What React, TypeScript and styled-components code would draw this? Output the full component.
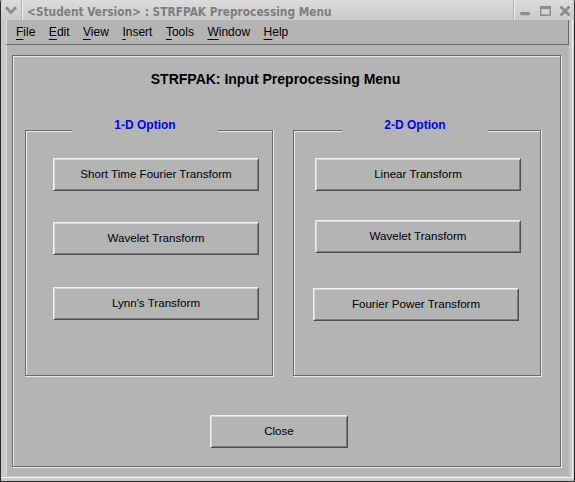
import React from 'react';
import styled, { createGlobalStyle } from 'styled-components';

const DARK = '#6b6b6b';
const LIGHT = '#e9e9e9';
const FACE = '#b4b4b4';
const ICON = '#8c8c8c';

const GlobalStyle = createGlobalStyle`
  html, body { margin: 0; padding: 0; background: #b4b4b4; }
  body { font-family: "Liberation Sans", Arial, sans-serif; }
  * { box-sizing: border-box; }
`;

const Window = styled.div`
  width: 575px;
  height: 482px;
  display: flex;
  flex-direction: column;
  background: #c9c9c9;
  border: 1px solid #2a2a2a;
  border-top: none;
  border-top-left-radius: 3px;
  border-top-right-radius: 3px;
  overflow: hidden;
`;

const TitleBar = styled.header`
  height: 20px;
  flex: none;
  display: flex;
  align-items: stretch;
  background: linear-gradient(#dcdcdc, #cacaca);
`;

const TitleButton = styled.div<{ $w?: number }>`
  width: ${(p) => p.$w ?? 20}px;
  flex: none;
  display: flex;
  align-items: center;
  justify-content: center;
`;

const TitleSep = styled.div`
  width: 2px;
  flex: none;
  background: linear-gradient(to right, #b3b3b3 50%, #efefef 50%);
`;

const TitleText = styled.div`
  flex: 1;
  padding: 5px 0 0 4px;
  font-family: "DejaVu Sans", "Liberation Sans", sans-serif;
  font-stretch: condensed;
  font-weight: bold;
  font-size: 11.8px;
  line-height: 14px;
  color: #7d7d7d;
  white-space: nowrap;
  overflow: hidden;
`;

const Frame = styled.div`
  flex: 1;
  display: flex;
  flex-direction: column;
  padding: 0 5px 5px 5px;
  box-shadow: inset -1px -3px 0 #c9c9c9, inset -2px -4px 0 #f4f4f4;
`;

const Client = styled.div`
  flex: 1;
  display: flex;
  flex-direction: column;
  background: ${FACE};
  box-shadow: inset 1px 0 0 #dedede;
`;

const MenuBar = styled.nav`
  height: 25px;
  flex: none;
  display: flex;
  align-items: center;
  gap: 13.5px;
  padding-left: 10px;
  border-bottom: 1px solid ${DARK};
  border-right: 1px solid ${DARK};
  font-size: 12px;
  line-height: 14px;
  color: #000;
`;

const MenuItem = styled.span`
  white-space: nowrap;
  u {
    text-decoration: underline;
    text-underline-offset: 3px;
  }
`;

const Content = styled.main`
  flex: 1;
  display: flex;
  padding: 10px 8px 9px 6px;
`;

const Panel = styled.section`
  flex: 1;
  display: flex;
  flex-direction: column;
  border: 1px solid ${DARK};
  box-shadow: inset 1px 1px 0 ${LIGHT}, 1px 1px 0 ${LIGHT};
`;

const Heading = styled.h1`
  margin: 15px 0 0;
  padding-right: 22px;
  text-align: center;
  font-size: 14px;
  line-height: 16px;
  font-weight: bold;
  color: #000;
`;

const GroupsRow = styled.div`
  display: grid;
  grid-template-columns: 248px 248px;
  column-gap: 20px;
  padding-left: 12px;
  margin-top: 31px;
`;

const Group = styled.div`
  height: 258px;
  display: flex;
  flex-direction: column;
`;

const GroupHead = styled.div`
  height: 14px;
  display: flex;
  align-items: flex-end;
`;

const Edge = styled.div<{ $side: 'left' | 'right'; $w?: number }>`
  height: 2px;
  border-top: 1px solid ${DARK};
  background: ${LIGHT};
  ${(p) =>
    p.$side === 'left'
      ? `flex: none; width: ${p.$w}px; border-left: 1px solid ${DARK};`
      : `flex: 1; border-right: 1px solid ${DARK}; box-shadow: 1px 0 0 ${LIGHT};`}
`;

const GroupTitle = styled.div`
  width: 146px;
  flex: none;
  text-align: center;
  font-size: 12px;
  line-height: 14px;
  font-weight: bold;
  color: #0000ff;
`;

const GroupBody = styled.div<{ $inset: number }>`
  flex: 1;
  display: flex;
  flex-direction: column;
  align-items: flex-start;
  gap: 31px;
  padding: 26px 0 0 ${(p) => p.$inset}px;
  border: 1px solid ${DARK};
  border-top: none;
  box-shadow: inset 1px 0 0 ${LIGHT}, 1px 0 0 ${LIGHT}, 0 1px 0 ${LIGHT},
    1px 1px 0 ${LIGHT};
`;

const Button = styled.button<{ $w?: number; $dx?: number; $dy?: number }>`
  width: ${(p) => p.$w ?? 206}px;
  height: 33px;
  flex: none;
  margin: ${(p) => p.$dy ?? 0}px 0 0 ${(p) => p.$dx ?? 0}px;
  padding: 0 0 2px;
  background: ${FACE};
  border: 1px solid;
  border-color: #f0f0f0 #4f4f4f #4f4f4f #f0f0f0;
  box-shadow: inset 1px 1px 0 #d6d6d6, inset -1px -1px 0 #7a7a7a;
  font-family: "Liberation Sans", Arial, sans-serif;
  font-size: 11.6px;
  color: #000;
  cursor: default;
`;

const Footer = styled.div`
  display: flex;
  margin-top: 39px;
  padding-left: 197px;
`;

const MenuIcon = () => (
  <svg width="12" height="8" viewBox="0 0 12 8">
    <path d="M1 1.2 L6 6.5 L11 1.2" fill="none" stroke={ICON} strokeWidth="2.8" />
  </svg>
);

const MinIcon = () => (
  <svg width="12" height="12" viewBox="0 0 12 12">
    <rect x="1" y="8" width="10" height="3.2" rx="1.5" fill={ICON} />
  </svg>
);

const MaxIcon = () => (
  <svg width="12" height="12" viewBox="0 0 12 12">
    <rect x="1.75" y="2.75" width="9.5" height="8.5" fill="none" stroke={ICON} strokeWidth="1.5" />
    <rect x="1" y="2" width="11" height="3" fill={ICON} />
  </svg>
);

const CloseIcon = () => (
  <svg width="12" height="12" viewBox="0 0 12 12">
    <path d="M1.5 2.5 L10.5 11.5 M10.5 2.5 L1.5 11.5" stroke={ICON} strokeWidth="2.8" />
  </svg>
);

const menus = ['File', 'Edit', 'View', 'Insert', 'Tools', 'Window', 'Help'];

export default function App() {
  return (
    <>
      <GlobalStyle />
      <Window>
        <TitleBar>
          <TitleButton>
            <MenuIcon />
          </TitleButton>
          <TitleSep />
          <TitleText>&lt;Student Version&gt; : STRFPAK Preprocessing Menu</TitleText>
          <TitleSep />
          <TitleButton>
            <MinIcon />
          </TitleButton>
          <TitleButton>
            <MaxIcon />
          </TitleButton>
          <TitleButton $w={19}>
            <CloseIcon />
          </TitleButton>
        </TitleBar>
        <Frame>
          <Client>
            <MenuBar>
              {menus.map((m) => (
                <MenuItem key={m}>
                  <u>{m[0]}</u>
                  {m.slice(1)}
                </MenuItem>
              ))}
            </MenuBar>
            <Content>
              <Panel>
                <Heading>STRFPAK: Input Preprocessing Menu</Heading>
                <GroupsRow>
                  <Group>
                    <GroupHead>
                      <Edge $side="left" $w={47} />
                      <GroupTitle>1-D Option</GroupTitle>
                      <Edge $side="right" />
                    </GroupHead>
                    <GroupBody $inset={27}>
                      <Button>Short Time Fourier Transform</Button>
                      <Button>Wavelet Transform</Button>
                      <Button $dy={1}>Lynn's Transform</Button>
                    </GroupBody>
                  </Group>
                  <Group>
                    <GroupHead>
                      <Edge $side="left" $w={49} />
                      <GroupTitle>2-D Option</GroupTitle>
                      <Edge $side="right" />
                    </GroupHead>
                    <GroupBody $inset={21}>
                      <Button>Linear Transform</Button>
                      <Button $dy={-2}>Wavelet Transform</Button>
                      <Button $dx={-2} $dy={4}>Fourier Power Transform</Button>
                    </GroupBody>
                  </Group>
                </GroupsRow>
                <Footer>
                  <Button $w={138}>Close</Button>
                </Footer>
              </Panel>
            </Content>
          </Client>
        </Frame>
      </Window>
    </>
  );
}
